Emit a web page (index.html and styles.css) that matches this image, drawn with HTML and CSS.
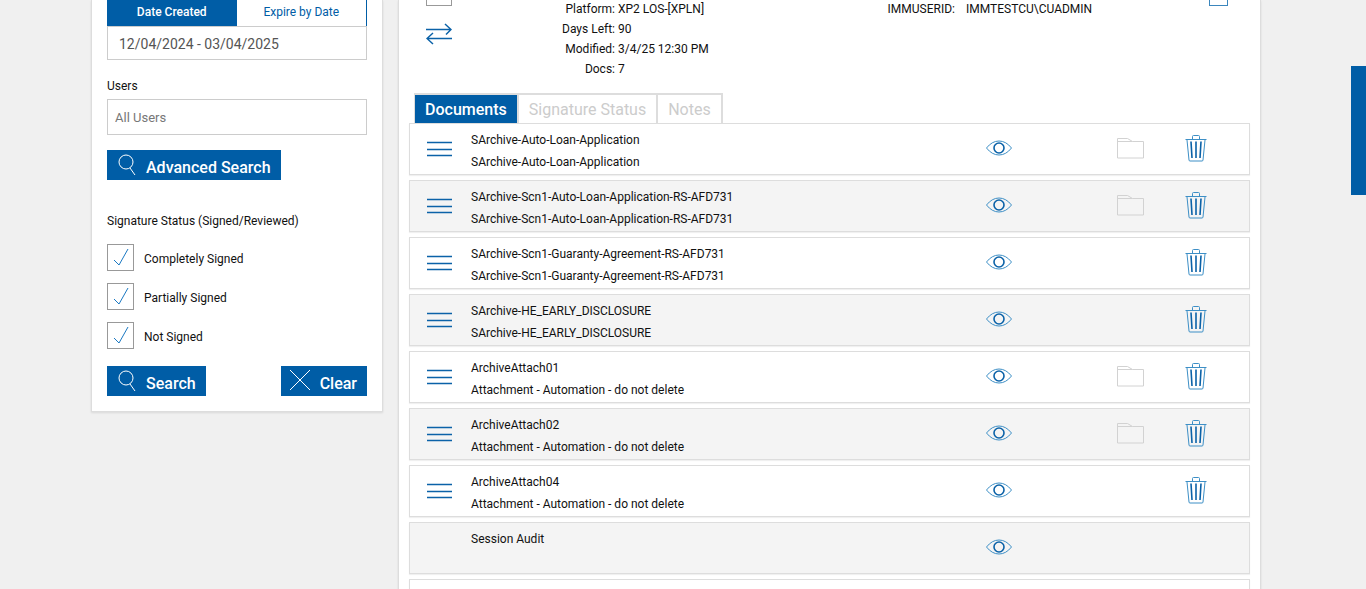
FILE: index.html
```html
<!DOCTYPE html>
<html lang="en">
<head>
<meta charset="utf-8">
<title>Documents</title>
<link rel="stylesheet" href="styles.css">
</head>
<body>
<svg class="symbols" aria-hidden="true">
  <symbol id="search" viewBox="0 0 18 22"><circle cx="8" cy="8" r="7"/><path d="M12 14l5 7"/></symbol>
  <symbol id="close" viewBox="0 0 20 20"><path d="M0 0l20 20M20 0L0 20"/></symbol>
  <symbol id="check" viewBox="0 0 27 27"><path d="M7 16l5 5L21 5"/></symbol>
  <symbol id="bars" viewBox="0 0 25 16"><path d="M0 1.5h25M0 8.500h25M0 14.500h25"/></symbol>
  <symbol id="eye" viewBox="0 0 26 16"><path class="thin" d="M.5 8Q6 1 13 1T25.500 8Q20 15 13 15T.5 8z"/><circle class="pupil" cx="13" cy="8" r="5"/></symbol>
  <symbol id="folder" viewBox="0 0 27 22"><path d="M.5 21V1.500H10.500L15.500 4.500H26.500V21zM.5 4.500H15.500"/></symbol>
  <symbol id="trash" viewBox="0 0 22 28"><path class="thin" d="M.5 5.500h21M2 6l2 20q0 1 1 1h12q1 0 1-1L20 6M7.500 5V2.500q0-1 1-1h5q1 0 1 1V5"/><path class="slats" d="M6 7.500l1 16.500M11 7.500V24M16 7.500L15 24"/></symbol>
  <symbol id="swap" viewBox="0 0 26 22"><path d="M0 6.500h25M19 1l6 5.500-5 5M26 15.500H1M7 10l-6 5.500 6 5.500"/></symbol>
</svg>

<div class="page">
  <aside class="card filters">
    <div class="date-modes">
      <button type="button" class="mode mode-active">Date Created</button>
      <button type="button" class="mode">Expire by Date</button>
    </div>
    <input class="field date-range" type="text" aria-label="Date range" value="12/04/2024 - 03/04/2025">
    <label class="field-label" for="users">Users</label>
    <input class="field users" id="users" type="text" placeholder="All Users">
    <button type="button" class="button"><svg class="icon-search"><use href="#search"/></svg>Advanced Search</button>
    <fieldset class="statuses">
      <legend>Signature Status (Signed/Reviewed)</legend>
      <label class="status"><span class="tick"><input type="checkbox" checked><svg><use href="#check"/></svg></span>Completely Signed</label>
      <label class="status"><span class="tick"><input type="checkbox" checked><svg><use href="#check"/></svg></span>Partially Signed</label>
      <label class="status"><span class="tick"><input type="checkbox" checked><svg><use href="#check"/></svg></span>Not Signed</label>
    </fieldset>
    <div class="actions">
      <button type="button" class="button"><svg class="icon-search"><use href="#search"/></svg>Search</button>
      <button type="button" class="button button-clear"><svg class="icon-close"><use href="#close"/></svg>Clear</button>
    </div>
  </aside>

  <main class="card session">
    <header class="summary">
      <div class="tools">
        <input class="select-session" type="checkbox" aria-label="Select session">
        <button type="button" class="plain" aria-label="Transfer"><svg class="icon-swap"><use href="#swap"/></svg></button>
      </div>
      <dl class="facts">
        <dt>Platform:</dt><dd>XP2 LOS-[XPLN]</dd>
        <dt>Days Left:</dt><dd>90</dd>
        <dt>Modified:</dt><dd>3/4/25 12:30 PM</dd>
        <dt>Docs:</dt><dd>7</dd>
      </dl>
      <dl class="facts facts-user">
        <dt>IMMUSERID:</dt><dd>IMMTESTCU\CUADMIN</dd>
      </dl>
      <button type="button" class="bin-edge" aria-label="Delete session"></button>
    </header>

    <div class="tabs" role="tablist">
      <button type="button" class="tab tab-active" role="tab" aria-selected="true">Documents</button>
      <button type="button" class="tab" role="tab">Signature Status</button>
      <button type="button" class="tab" role="tab">Notes</button>
    </div>

    <ul class="documents">
      <li class="document">
        <button type="button" class="plain" aria-label="Move"><svg class="icon-bars"><use href="#bars"/></svg></button>
        <div class="names"><p>SArchive-Auto-Loan-Application</p><p>SArchive-Auto-Loan-Application</p></div>
        <button type="button" class="plain view" aria-label="View"><svg class="icon-eye"><use href="#eye"/></svg></button>
        <button type="button" class="plain file" aria-label="Folder"><svg class="icon-folder"><use href="#folder"/></svg></button>
        <button type="button" class="plain bin" aria-label="Delete"><svg class="icon-trash"><use href="#trash"/></svg></button>
      </li>
      <li class="document">
        <button type="button" class="plain" aria-label="Move"><svg class="icon-bars"><use href="#bars"/></svg></button>
        <div class="names"><p>SArchive-Scn1-Auto-Loan-Application-RS-AFD731</p><p>SArchive-Scn1-Auto-Loan-Application-RS-AFD731</p></div>
        <button type="button" class="plain view" aria-label="View"><svg class="icon-eye"><use href="#eye"/></svg></button>
        <button type="button" class="plain file" aria-label="Folder"><svg class="icon-folder"><use href="#folder"/></svg></button>
        <button type="button" class="plain bin" aria-label="Delete"><svg class="icon-trash"><use href="#trash"/></svg></button>
      </li>
      <li class="document">
        <button type="button" class="plain" aria-label="Move"><svg class="icon-bars"><use href="#bars"/></svg></button>
        <div class="names"><p>SArchive-Scn1-Guaranty-Agreement-RS-AFD731</p><p>SArchive-Scn1-Guaranty-Agreement-RS-AFD731</p></div>
        <button type="button" class="plain view" aria-label="View"><svg class="icon-eye"><use href="#eye"/></svg></button>
        <button type="button" class="plain bin" aria-label="Delete"><svg class="icon-trash"><use href="#trash"/></svg></button>
      </li>
      <li class="document">
        <button type="button" class="plain" aria-label="Move"><svg class="icon-bars"><use href="#bars"/></svg></button>
        <div class="names"><p>SArchive-HE_EARLY_DISCLOSURE</p><p>SArchive-HE_EARLY_DISCLOSURE</p></div>
        <button type="button" class="plain view" aria-label="View"><svg class="icon-eye"><use href="#eye"/></svg></button>
        <button type="button" class="plain bin" aria-label="Delete"><svg class="icon-trash"><use href="#trash"/></svg></button>
      </li>
      <li class="document">
        <button type="button" class="plain" aria-label="Move"><svg class="icon-bars"><use href="#bars"/></svg></button>
        <div class="names"><p>ArchiveAttach01</p><p>Attachment - Automation - do not delete</p></div>
        <button type="button" class="plain view" aria-label="View"><svg class="icon-eye"><use href="#eye"/></svg></button>
        <button type="button" class="plain file" aria-label="Folder"><svg class="icon-folder"><use href="#folder"/></svg></button>
        <button type="button" class="plain bin" aria-label="Delete"><svg class="icon-trash"><use href="#trash"/></svg></button>
      </li>
      <li class="document">
        <button type="button" class="plain" aria-label="Move"><svg class="icon-bars"><use href="#bars"/></svg></button>
        <div class="names"><p>ArchiveAttach02</p><p>Attachment - Automation - do not delete</p></div>
        <button type="button" class="plain view" aria-label="View"><svg class="icon-eye"><use href="#eye"/></svg></button>
        <button type="button" class="plain file" aria-label="Folder"><svg class="icon-folder"><use href="#folder"/></svg></button>
        <button type="button" class="plain bin" aria-label="Delete"><svg class="icon-trash"><use href="#trash"/></svg></button>
      </li>
      <li class="document">
        <button type="button" class="plain" aria-label="Move"><svg class="icon-bars"><use href="#bars"/></svg></button>
        <div class="names"><p>ArchiveAttach04</p><p>Attachment - Automation - do not delete</p></div>
        <button type="button" class="plain view" aria-label="View"><svg class="icon-eye"><use href="#eye"/></svg></button>
        <button type="button" class="plain bin" aria-label="Delete"><svg class="icon-trash"><use href="#trash"/></svg></button>
      </li>
      <li class="document">
        <div class="names"><p>Session Audit</p></div>
        <button type="button" class="plain view" aria-label="View"><svg class="icon-eye"><use href="#eye"/></svg></button>
      </li>
      <li class="document"></li>
    </ul>
  </main>
</div>
<button type="button" class="side-handle" aria-label="Open panel"></button>
</body>
</html>
```

FILE: styles.css
```css
* { box-sizing: border-box; }

body {
  margin: 0;
  padding-right: 14px;
  height: 100vh;
  overflow: hidden;
  background: #f0f0f0;
  color: #111;
  font: 12px/20px Roboto, "Liberation Sans", sans-serif;
}

button, input { font: inherit; }
button { margin: 0; padding: 0; border: 0; cursor: pointer; }
p, dl, dd, ul { margin: 0; padding: 0; }
svg { display: block; fill: none; stroke: currentColor; }
.symbols { position: absolute; width: 0; height: 0; }

.page {
  display: grid;
  grid-template-columns: 292px minmax(0, 1fr);
  align-items: start;
  gap: 15px;
  max-width: 1170px;
  margin: 0 auto;
}

.card {
  border: 1px solid #ddd;
  border-top: 0;
  background: #fff;
  box-shadow: 0 1px 2px rgba(0, 0, 0, .1);
}

.filters { padding: 0 15px 15px; }

.date-modes {
  display: grid;
  grid-template-columns: 1fr 1fr;
  border-right: 1px solid #005da6;
}
.mode { height: 26px; padding-bottom: 2px; background: #fff; color: #005da6; }
.mode-active { background: #005da6; color: #fff; font-weight: 500; }

.field {
  display: block;
  width: 100%;
  border: 1px solid #ccc;
  border-radius: 0;
  background: #fff;
}
.date-range { height: 34px; padding: 2px 11px 0; color: #555; font-size: 14px; }
.field-label { display: block; margin: 16px 0 3px; }
.users { height: 36px; margin-bottom: 15px; padding: 0 7px; font-size: 13px; }
.users::placeholder { color: #777; }

.button {
  display: flex;
  gap: 10px;
  height: 30px;
  padding: 4px 10px 0 11px;
  background: #005da6;
  color: #fff;
  font-size: 16px;
  font-weight: 500;
  line-height: 28px;
}
.button-clear { padding-left: 9px; }
.icon-search { width: 18px; height: 22px; }
.icon-close { width: 20px; height: 20px; }

.statuses { margin: 31px 0 17px; padding: 0; border: 0; }
.statuses legend { padding: 0; margin-bottom: 13px; }
.status { display: flex; gap: 10px; height: 27px; line-height: 31px; }
.status + .status { margin-top: 12px; }
.tick { display: grid; color: #1a78c2; }
.tick > * { grid-area: 1 / 1; width: 27px; height: 27px; margin: 0; }
.tick input { appearance: none; border: 1px solid #999; background: #fff; }
.tick svg { pointer-events: none; }
.actions { display: flex; justify-content: space-between; }

.session { min-height: 100vh; padding: 0 10px; }

.summary {
  display: grid;
  grid-template-columns: 135px 1fr 323px 19px;
  align-items: start;
  height: 93px;
  padding: 0 22px 0 17px;
}
.tools { display: grid; gap: 17px; justify-items: start; }
.select-session {
  appearance: none;
  width: 26px;
  height: 6px;
  margin: 0;
  border: 1px solid #999;
  border-top: 0;
}
.icon-swap { width: 26px; height: 22px; stroke-width: 1.5; }
.facts {
  display: grid;
  grid-template-columns: 54px 1fr;
  grid-auto-rows: 20px;
  column-gap: 3px;
  line-height: 18px;
  text-align: right;
}
.facts dd { text-align: left; }
.facts-user { grid-template-columns: 69px 1fr; column-gap: 11px; }
.bin-edge { height: 6px; border: 1px solid #3b86bd; border-top: 0; background: #fff; }

.plain { background: transparent; color: #0b62a8; }

.tabs {
  display: inline-flex;
  gap: 2px;
  margin-left: 5px;
  padding: 2px 2px 0 1px;
  background: #ddd;
  vertical-align: top;
}
.tab {
  height: 28px;
  padding: 1px 10px 0;
  background: #fff;
  color: #ccc;
  font-size: 16px;
}
.tab-active { background: #005da6; color: #fff; font-weight: 500; }

.documents { display: grid; gap: 5px; list-style: none; }
.document {
  display: grid;
  grid-template-columns: 44px minmax(0, 1fr) 131px 68px 50px;
  align-items: start;
  height: 52px;
  padding: 0 14px 0 17px;
  border: 1px solid #ddd;
  background: #fff;
  box-shadow: 0 1px 1px rgba(0, 0, 0, .06);
}
.document:nth-child(even) { background: #f4f4f4; }
.document > * { grid-row: 1; justify-self: start; }
.names { grid-column: 2; padding: 5px 0 0; line-height: 22px; }
.view { grid-column: 3; padding-top: 16px; }
.file { grid-column: 4; padding-top: 13px; color: #d2d2d2; }
.bin { grid-column: 5; padding-top: 10px; }
.document > .plain:first-child { padding-top: 17px; }
.icon-bars { width: 25px; height: 16px; stroke-width: 1.6; }
.icon-eye { width: 26px; height: 16px; }
.icon-folder { width: 27px; height: 22px; }
.icon-trash { width: 22px; height: 28px; }
.pupil, .slats { stroke-width: 1.6; }
.thin { stroke: #3d8fc6; }

.side-handle {
  position: fixed;
  top: 66px;
  right: 0;
  width: 15px;
  height: 129px;
  background: #005da6;
}
```
